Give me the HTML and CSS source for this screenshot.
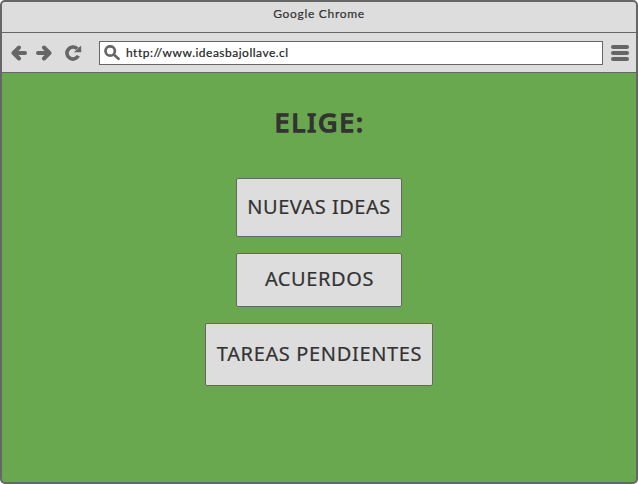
FILE: index.html
```html
<!DOCTYPE html>
<html lang="es">
<head>
<meta charset="utf-8">
<title>Google Chrome</title>
<link rel="stylesheet" href="styles.css">
</head>
<body>
<div class="window">
  <header class="titlebar"><span>Google Chrome</span></header>
  <nav class="toolbar">
    <svg class="arrow" width="16" height="16" viewBox="0 0 16 16"><path d="M14 8H4M8 2.5L2.5 8L8 13.5"/></svg>
    <svg class="arrow forward" width="16" height="16" viewBox="0 0 16 16"><path d="M2 8H12M8 2.5L13.5 8L8 13.5"/></svg>
    <svg class="reload" width="17" height="16" viewBox="0 0 17 16"><path class="ring" d="M12.2 3.8A6 6 0 1 0 13.3 10.8"/><path class="tip" d="M16.2 .8V7.2H8.8L11.5 4.9L14 2.2Z"/></svg>
    <div class="address">
      <svg class="search" width="17" height="16" viewBox="0 0 17 16"><circle cx="6.2" cy="6" r="4.7"/><path d="M10 9.8L14.5 13.8"/></svg>
      <span class="url">http://www.ideasbajollave.cl</span>
    </div>
    <div class="menu"><i></i><i></i><i></i></div>
  </nav>
  <main class="page">
    <h1>ELIGE:</h1>
    <button class="ideas"><span>NUEVAS IDEAS</span></button>
    <button class="acuerdos"><span>ACUERDOS</span></button>
    <button class="tareas"><span>TAREAS PENDIENTES</span></button>
  </main>
</div>
</body>
</html>
```
FILE: styles.css
```css
* { box-sizing: border-box; }
body { margin: 0; background: #fff; color: #333; font-family: "Noto Sans", sans-serif; }
.window { width: 638px; height: 484px; border: 2px solid #666; border-radius: 5px; background: #6aa84f; overflow: hidden; display: flex; flex-direction: column; }
.titlebar { height: 31px; flex: none; background: #ddd; border-bottom: 1px solid #666; text-align: center; font: 400 12px/23px Lato, sans-serif; -webkit-text-stroke: .2px #333; letter-spacing: .7px; }
.toolbar { height: 40px; flex: none; background: #ddd; border-bottom: 1px solid #666; display: flex; align-items: center; padding: 0 7px 0 9px; }
.arrow { fill: none; stroke: #666; stroke-width: 4; stroke-linecap: round; stroke-linejoin: round; }
.forward { margin-left: 9px; }
.reload { margin-left: 13px; }
.ring { fill: none; stroke: #666; stroke-width: 3.6; }
.tip { fill: #666; }
.address { width: 504px; height: 24px; margin-left: 17px; border: 1px solid #666; background: #fff; display: flex; align-items: center; padding-left: 4px; }
.search { fill: none; stroke: #666; stroke-width: 2.7; stroke-linecap: round; }
.url { margin: 1px 0 0 5px; color: #222; font: 12px/20px Lato, sans-serif; -webkit-text-stroke: .2px #222; letter-spacing: .5px; }
.menu { margin-left: auto; width: 18px; display: grid; gap: 2px; }
.menu i { height: 4px; border-radius: 2px; background: #666; }
.page { flex: 1; display: flex; flex-direction: column; align-items: center; }
h1 { margin: 29px 0 36px; font-size: 26px; line-height: 40px; font-weight: 400; letter-spacing: 2.2px; text-indent: 2px; -webkit-text-stroke: 1.7px #333; }
button { width: 166px; padding: 0 0 2px; border: 1px solid #666; border-radius: 2px; background: #ddd; color: #333; font: 20px/28px "Noto Sans", sans-serif; -webkit-text-stroke: .2px #333; white-space: nowrap; }
.ideas { height: 59px; letter-spacing: .5px; }
.acuerdos { height: 54px; margin-top: 16px; padding-left: 1px; letter-spacing: .6px; }
.tareas { width: 228px; height: 63px; margin-top: 16px; padding-left: 1px; letter-spacing: .65px; }
```
